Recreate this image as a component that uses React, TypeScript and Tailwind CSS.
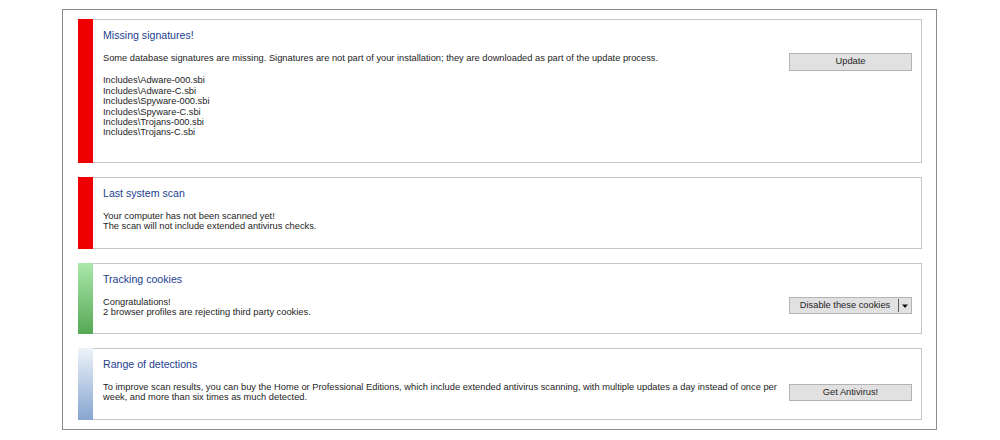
import React from 'react';

type Tone = 'red' | 'green' | 'blue';

interface StatusPanelProps {
  tone: Tone;
  title: string;
  height: string;
  button?: React.ReactNode;
  buttonOffset?: string;
  children: React.ReactNode;
}

const barClass: Record<Tone, string> = {
  red: 'bg-[#ee0000]',
  green: 'bg-gradient-to-b from-[#abe8ab] to-[#55a855]',
  blue: 'bg-gradient-to-b from-[#eef3f9] to-[#86a5cf]',
};

const StatusPanel: React.FC<StatusPanelProps> = ({ tone, title, height, button, buttonOffset, children }) => {
  return (
    <div className={`flex ${height} bg-white`}>
      <div className={`w-[15px] shrink-0 ${barClass[tone]}`} />
      <div className="flex flex-1 border border-l-0 border-[#c6c6c6]">
        <div className="flex-1 pl-[10px] pt-[8px]">
          <h3 className="text-[10.6px] leading-[14px] text-[#23408f]">{title}</h3>
          <div className="mt-[11px] text-[9.3px] leading-[10.4px] text-[#1e1e1e]">{children}</div>
        </div>
        {button && (
          <div className={`w-[123px] mr-[9px] shrink-0 ${buttonOffset}`}>{button}</div>
        )}
      </div>
    </div>
  );
};

const PlainButton: React.FC<{ label: string; tall?: boolean }> = ({ label, tall }) => (
  <div
    className={`flex items-center justify-center w-full ${tall ? 'h-[18px]' : 'h-[17px]'} bg-[#e1e1e1] border border-[#b3b3b3] text-[9.3px] text-[#1e1e1e]`}
  >
    {label}
  </div>
);

const SplitButton: React.FC<{ label: string }> = ({ label }) => (
  <div className="flex items-center w-full h-[17px] bg-[#e1e1e1] border border-[#b3b3b3] text-[9.3px] text-[#1e1e1e]">
    <span className="flex-1 text-center pl-[2px]">{label}</span>
    <span className="w-px h-[13px] bg-[#5a5a5a]" />
    <svg width="10" height="8" viewBox="0 0 10 8" className="mx-[1px]">
      <path d="M2 2.5 L8 2.5 L5 6 Z" fill="#111" />
    </svg>
  </div>
);

export default function App() {
  const includes = [
    'Includes\\Adware-000.sbi',
    'Includes\\Adware-C.sbi',
    'Includes\\Spyware-000.sbi',
    'Includes\\Spyware-C.sbi',
    'Includes\\Trojans-000.sbi',
    'Includes\\Trojans-C.sbi',
  ];

  return (
    <div
      className="w-[1000px] h-[440px] bg-white pl-[62px] pt-[9px]"
      style={{ fontFamily: '"Liberation Sans", Arial, sans-serif' }}
    >
      <div className="w-[875px] h-[421px] border border-[#8c8c8c] pl-[15px] pr-[14px] pt-[9px] flex flex-col gap-[14px]">
        <StatusPanel
          tone="red"
          title="Missing signatures!"
          height="h-[144px]"
          buttonOffset="pt-[33px]"
          button={<PlainButton label="Update" tall />}
        >
          <p>
            Some database signatures are missing. Signatures are not part of your installation; they are
            downloaded as part of the update process.
          </p>
          <div className="mt-[12px]">
            {includes.map((line) => (
              <div key={line}>{line}</div>
            ))}
          </div>
        </StatusPanel>

        <StatusPanel tone="red" title="Last system scan" height="h-[72px]">
          <p>Your computer has not been scanned yet!</p>
          <p>The scan will not include extended antivirus checks.</p>
        </StatusPanel>

        <StatusPanel
          tone="green"
          title="Tracking cookies"
          height="h-[71px]"
          buttonOffset="pt-[33px]"
          button={<SplitButton label="Disable these cookies" />}
        >
          <p>Congratulations!</p>
          <p>2 browser profiles are rejecting third party cookies.</p>
        </StatusPanel>

        <StatusPanel
          tone="blue"
          title="Range of detections"
          height="h-[72px]"
          buttonOffset="pt-[35px]"
          button={<PlainButton label="Get Antivirus!" />}
        >
          <p>
            To improve scan results, you can buy the Home or Professional Editions, which include extended
            antivirus scanning, with multiple updates a day instead of once per
            <br />
            week, and more than six times as much detected.
          </p>
        </StatusPanel>
      </div>
    </div>
  );
}
